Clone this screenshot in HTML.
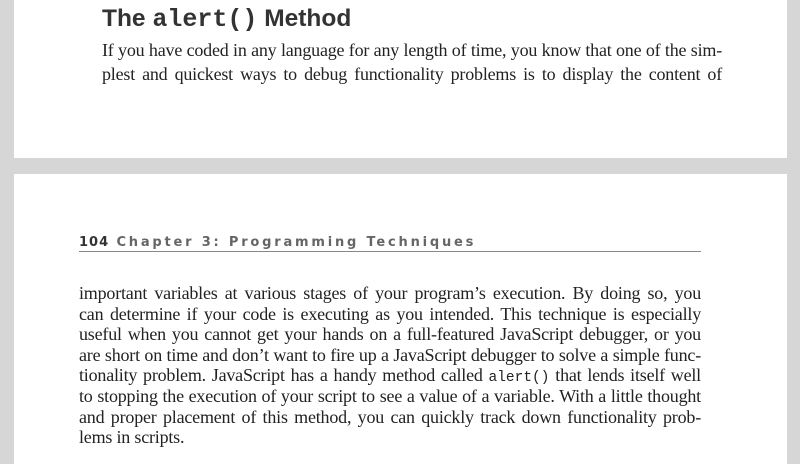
<!DOCTYPE html>
<html><head><meta charset="utf-8"><style>
body{margin:0;width:800px;height:458px;background:#d6d6d6;position:relative;overflow:hidden;font-family:"Liberation Serif",serif;color:#222}
.pg{position:absolute;left:14px;width:773px;background:#fff}
.l{position:absolute;white-space:nowrap;text-align:justify;text-align-last:justify;font-size:18px;letter-spacing:-0.2px}
.last{text-align-last:left}
code{font-family:"Liberation Mono",monospace;font-size:14.5px;letter-spacing:0}
</style></head><body>
<div class="pg" style="top:0;height:158px"></div>
<div class="pg" style="top:174px;height:290px"></div>
<div style="position:absolute;left:102px;top:5px;font-family:'Liberation Sans',sans-serif;font-weight:bold;font-size:24.5px;color:#333">The <span style="font-family:'Liberation Mono',monospace;font-size:25px">alert()</span> Method</div>
<div class="l" style="left:102px;width:620px;top:38px;line-height:24px">If you have coded in any language for any length of time, you know that one of the sim-</div>
<div class="l" style="left:102px;width:620px;top:62px;line-height:24px">plest and quickest ways to debug functionality problems is to display the content of</div>
<div style="position:absolute;left:79px;top:235px;font-family:'DejaVu Sans',sans-serif;font-weight:bold;font-size:13px;letter-spacing:2.8px;color:#666"><span style="color:#333;letter-spacing:1px">104</span> Chapter 3: Programming Techniques</div>
<div style="position:absolute;left:79px;top:251px;width:622px;height:1px;background:#888"></div>
<div class="l" style="left:79px;width:622px;top:283px;line-height:20.6px">important variables at various stages of your program’s execution. By doing so, you</div>
<div class="l" style="left:79px;width:622px;top:303.6px;line-height:20.6px">can determine if your code is executing as you intended. This technique is especially</div>
<div class="l" style="left:79px;width:622px;top:324.2px;line-height:20.6px">useful when you cannot get your hands on a full-featured JavaScript debugger, or you</div>
<div class="l" style="left:79px;width:622px;top:344.8px;line-height:20.6px">are short on time and don’t want to fire up a JavaScript debugger to solve a simple func-</div>
<div class="l" style="left:79px;width:622px;top:365.4px;line-height:20.6px">tionality problem. JavaScript has a handy method called <code>alert()</code> that lends itself well</div>
<div class="l" style="left:79px;width:622px;top:386px;line-height:20.6px">to stopping the execution of your script to see a value of a variable. With a little thought</div>
<div class="l" style="left:79px;width:622px;top:406.6px;line-height:20.6px">and proper placement of this method, you can quickly track down functionality prob-</div>
<div class="l last" style="left:79px;width:622px;top:427.2px;line-height:20.6px">lems in scripts.</div>
</body></html>
